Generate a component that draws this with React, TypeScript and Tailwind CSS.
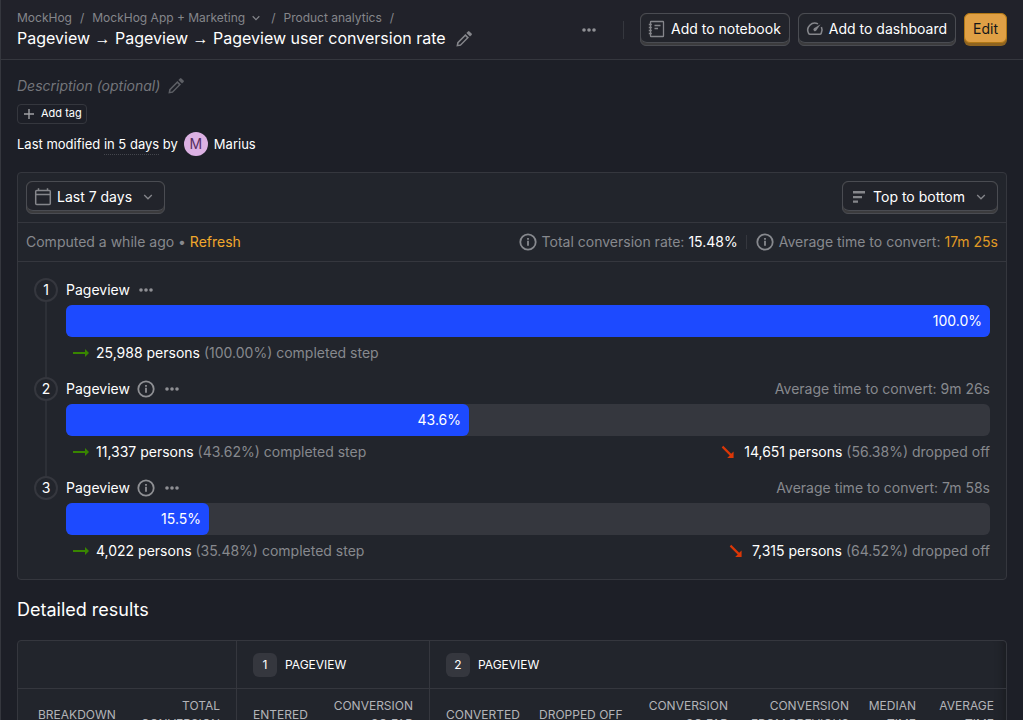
import React from "react";

type IconProps = { className?: string };

function Ellipsis({ className = "size-5" }: IconProps) {
  return (
    <svg viewBox="0 0 20 20" className={className} fill="currentColor" aria-hidden="true">
      <circle cx="5" cy="10" r="1.8" />
      <circle cx="10" cy="10" r="1.8" />
      <circle cx="15" cy="10" r="1.8" />
    </svg>
  );
}

function Pencil({ className = "size-5" }: IconProps) {
  return (
    <svg viewBox="0 0 20 20" className={className} fill="currentColor" aria-hidden="true">
      <path d="M3.2 13.2l8.2-8.2 3.6 3.6-8.2 8.2-4.4.8zM4.7 14l-.4 1.8 1.8-.4 6.7-6.7-1.5-1.5z" fillRule="evenodd" />
      <path d="M12.4 4l1.6-1.6a1 1 0 0 1 1.4 0l2.2 2.2a1 1 0 0 1 0 1.4L16 7.6z" />
    </svg>
  );
}

function Notebook({ className = "size-5" }: IconProps) {
  return (
    <svg viewBox="0 0 20 20" className={className} fill="none" stroke="currentColor" strokeWidth="1.3" aria-hidden="true">
      <rect x="3.5" y="2.5" width="13" height="15" rx="0.6" />
      <path d="M1.8 5.5h3M1.8 8.5h3M1.8 11.5h3M1.8 14.5h3M7.5 6.5h6M7.5 9.5h3.5" />
    </svg>
  );
}

function Gauge({ className = "size-5" }: IconProps) {
  return (
    <svg viewBox="0 0 20 20" className={className} fill="none" stroke="currentColor" strokeWidth="1.6" aria-hidden="true">
      <path d="M13 4.9A7 7 0 0 0 3.6 14.4a1.5 1.5 0 0 0 1.3.8h10a1.5 1.5 0 0 0 1.3-.8 7 7 0 0 0 .2-6.4" />
      <path d="M15.6 5.2l-4.3 6.3a1.6 1.6 0 1 1-2.3-2.2z" fill="currentColor" stroke="none" />
    </svg>
  );
}

function Calendar({ className = "size-5" }: IconProps) {
  return (
    <svg viewBox="0 0 20 20" className={className} fill="none" stroke="currentColor" strokeWidth="1.5" aria-hidden="true">
      <rect x="2.7" y="3.5" width="14.6" height="14" rx="1" />
      <path d="M2.7 7.5h14.6M5.5 1.3v2.2M14.5 1.3v2.2" />
    </svg>
  );
}

function Chevron({ className = "size-4" }: IconProps) {
  return (
    <svg viewBox="0 0 16 16" className={className} fill="none" stroke="currentColor" strokeWidth="1.3" aria-hidden="true">
      <path d="M4.2 6l3.8 3.8L11.8 6" />
    </svg>
  );
}

function Bars({ className = "size-5" }: IconProps) {
  return (
    <svg viewBox="0 0 20 20" className={className} fill="currentColor" aria-hidden="true">
      <path d="M4 4h12v2.6H4zM4 9h9v2.2H4zM4 13.4h5v2.4H4z" />
    </svg>
  );
}

function Info({ className = "size-5" }: IconProps) {
  return (
    <svg viewBox="0 0 20 20" className={className} fill="none" stroke="currentColor" strokeWidth="1.8" aria-hidden="true">
      <circle cx="10" cy="10" r="7.7" />
      <path d="M10 8.8v5M10 5.9v1.8" />
    </svg>
  );
}

function Flat({ className = "size-5" }: IconProps) {
  return (
    <svg viewBox="0 0 20 20" className={className} fill="currentColor" aria-hidden="true">
      <path d="M19 10l-4-4v3H3v2h12v3z" />
    </svg>
  );
}

function Down({ className = "size-5" }: IconProps) {
  return (
    <svg viewBox="0 0 20 20" className={className} fill="currentColor" aria-hidden="true">
      <path d="M5.2 3.8l8 8L15.6 9.600V16H9.200l2.500-2.500-8-8z" />
    </svg>
  );
}

function Plus({ className = "size-4" }: IconProps) {
  return (
    <svg viewBox="0 0 16 16" className={className} fill="none" stroke="currentColor" strokeWidth="1.4" aria-hidden="true">
      <path d="M8 3v10M3 8h10" />
    </svg>
  );
}

function RaisedButton({ children }: { children: React.ReactNode }) {
  return (
    <button
      type="button"
      className="flex h-[33px] rounded-md border border-[#4a4c52] bg-[#3b3b3d]"
    >
      <span className="flex h-[29px] items-center gap-1 rounded-md border-b border-[#4a4c52] bg-[#22242b] pt-px pr-2 pl-1.5 whitespace-nowrap">
        {children}
      </span>
    </button>
  );
}

function Arrow() {
  return <span className="font-['Liberation_Sans',sans-serif]">→</span>;
}

type Step = {
  name: string;
  width: number;
  label: string;
  persons: string;
  rate: string;
  time?: string;
  lost?: string;
  lostRate?: string;
};

const steps: Step[] = [
  { name: "Pageview", width: 100, label: "100.0%", persons: "25,988 persons", rate: "(100.00%)" },
  { name: "Pageview", width: 43.62, label: "43.6%", persons: "11,337 persons", rate: "(43.62%)", time: "9m 26s", lost: "14,651 persons", lostRate: "(56.38%)" },
  { name: "Pageview", width: 15.48, label: "15.5%", persons: "4,022 persons", rate: "(35.48%)", time: "7m 58s", lost: "7,315 persons", lostRate: "(64.52%)" },
];

function FunnelStep({ step, index, last }: { step: Step; index: number; last: boolean }) {
  return (
    <li className="flex">
      <div className="flex w-8 shrink-0 flex-col items-start">
        <span className="flex size-6 items-center justify-center rounded-full border-2 border-[#35373e]">{index + 1}</span>
        {!last && <span className="ml-[11px] w-0.5 flex-1 bg-[#2d3037]" />}
      </div>
      <div className="min-w-0 flex-1 pb-2">
        <div className="flex h-6 items-center justify-between">
          <div className="flex items-center gap-1.5">
            <span>{step.name}</span>
            <span className="flex items-center gap-1.5 text-[#8f9094]">
              {step.time && <Info />}
              <button type="button" aria-label="Step actions" className="block">
                <Ellipsis />
              </button>
            </span>
          </div>
          {step.time && <span className="text-[#87898e]">Average time to convert: {step.time}</span>}
        </div>
        <div className="mt-[3px] h-8 rounded-md bg-[#35373e]">
          <div
            className="flex h-8 items-center justify-end rounded-md bg-[#1d4aff] px-2"
            style={{ width: `${step.width}%` }}
          >
            {step.label}
          </div>
        </div>
        <div className="flex h-8 items-center justify-between text-[#87898e]">
          <div className="flex items-center gap-1.5 pl-1">
            <Flat className="size-5 text-[#388600]" />
            <span>
              <span className="text-white">{step.persons}</span> {step.rate} completed step
            </span>
          </div>
          {step.lost && (
            <div className="flex items-center gap-1.5">
              <Down className="size-5 text-[#db3707]" />
              <span>
                <span className="text-white">{step.lost}</span> {step.lostRate} dropped off
              </span>
            </div>
          )}
        </div>
      </div>
    </li>
  );
}

function GroupHeading({ number, name }: { number: number; name: string }) {
  return (
    <span className="flex items-center gap-2 pl-4">
      <span className="flex size-6 items-center justify-center rounded-md bg-[#35373e]">{number}</span>
      {name}
    </span>
  );
}

export default function App() {
  return (
    <div className="min-h-screen border-l border-[#35373e] bg-[#1d1f27] font-['Inter',sans-serif] text-sm text-white">
      <header className="flex h-[60px] items-center justify-between border-b border-[#35373e] bg-[#21222a] px-4">
        <div>
          <nav aria-label="Breadcrumb" className="flex h-[18px] items-center gap-2 text-xs text-[#85868b]">
            <a href="#mockhog">MockHog</a>
            <span>/</span>
            <a href="#marketing" className="flex items-center gap-1">
              MockHog App + Marketing
              <Chevron className="size-3.5" />
            </a>
            <span>/</span>
            <a href="#product-analytics">Product analytics</a>
            <span>/</span>
          </nav>
          <div className="flex h-6 items-center gap-2">
            <h1 className="text-base">
              Pageview <Arrow /> Pageview <Arrow /> Pageview user conversion rate
            </h1>
            <button type="button" aria-label="Edit name" className="text-[#85868b]">
              <Pencil />
            </button>
          </div>
        </div>
        <div className="flex items-center gap-2">
          <button type="button" aria-label="More options" className="px-2 text-[#8f9094]">
            <Ellipsis />
          </button>
          <span className="mx-2 h-[18px] w-px bg-[#35373e]" />
          <RaisedButton>
            <Notebook className="size-5 text-[#85868b]" />
            Add to notebook
          </RaisedButton>
          <RaisedButton>
            <Gauge className="size-5 text-[#85868b]" />
            Add to dashboard
          </RaisedButton>
          <button type="button" className="flex h-[33px] rounded-md bg-[#8f6420]">
            <span className="flex h-[30px] items-center rounded-md border border-[#b17816] bg-[#e0a045] px-2 pt-px text-[#15161a]">
              Edit
            </span>
          </button>
        </div>
      </header>

      <main className="px-4">
        <section className="pt-4">
          <div className="flex h-5 items-center gap-1.5 text-[#74767b]">
            <span className="italic">Description (optional)</span>
            <button type="button" aria-label="Edit description" className="text-[#5d5f65]">
              <Pencil />
            </button>
          </div>
          <button type="button" className="mt-2 flex h-5 items-center gap-1 rounded border border-[#35373e] pr-1 pl-[3px] text-[11px]">
            <Plus className="size-4 text-[#a0a1a5]" />
            Add tag
          </button>
          <div className="mt-2 flex h-6 items-center gap-1.5 text-[13px]">
            <span>
              Last modified <span className="border-b border-dotted border-[#44464d] pb-0.5">in 5 days</span> by
            </span>
            <span className="flex size-6 items-center justify-center rounded-full bg-[#dcb1e3] text-sm text-[#572e5e]">M</span>
            <span>Marius</span>
          </div>
        </section>

        <section className="mt-4 rounded border border-[#35373e] bg-[#22252c]">
          <div className="flex justify-between border-b border-[#35373e] p-2">
            <RaisedButton>
              <Calendar className="size-5 text-[#85868b]" />
              Last 7 days
              <Chevron className="ml-1 size-4 text-[#85868b]" />
            </RaisedButton>
            <RaisedButton>
              <Bars className="size-5 text-[#85868b]" />
              Top to bottom
              <Chevron className="ml-1 size-4 text-[#85868b]" />
            </RaisedButton>
          </div>
          <div className="flex h-[39px] items-center justify-between border-b border-[#35373e] px-2 text-[#87898e]">
            <div>
              Computed a while ago • <button type="button" className="text-[#f1a82c]">Refresh</button>
            </div>
            <div className="flex items-center gap-1">
              <Info />
              <span>Total conversion rate:</span>
              <span className="text-white">15.48%</span>
              <span className="mx-1 h-3.5 w-px bg-[#35373e]" />
              <Info />
              <span>Average time to convert:</span>
              <button type="button" className="text-[#e09a24]">17m 25s</button>
            </div>
          </div>
          <ol className="px-4 pt-4 pb-1">
            {steps.map((step, i) => (
              <FunnelStep key={step.persons} step={step} index={i} last={i === steps.length - 1} />
            ))}
          </ol>
        </section>

        <h2 className="mt-4 text-lg">Detailed results</h2>

        <div className="mt-4 overflow-hidden rounded border border-[#35373e] bg-[#22252c] shadow-[inset_-12px_0_10px_-10px_rgba(0,0,0,0.3)]">
          <table className="w-full table-fixed border-separate border-spacing-0 text-xs">
            <colgroup>
              <col className="w-[110px]" />
              <col className="w-[108px]" />
              <col className="w-[83px]" />
              <col className="w-[110px]" />
              <col className="w-[102px]" />
              <col className="w-[106px]" />
              <col className="w-[99px]" />
              <col className="w-[121px]" />
              <col className="w-[67px]" />
              <col />
            </colgroup>
            <thead className="uppercase">
              <tr className="h-12 [&>th]:border-b [&>th]:border-[#35373e] [&>th]:p-0 [&>th]:font-normal">
                <td colSpan={2} className="border-b border-[#35373e]" />
                <th colSpan={2} className="border-l">
                  <GroupHeading number={1} name="Pageview" />
                </th>
                <th colSpan={6} className="border-l">
                  <GroupHeading number={2} name="Pageview" />
                </th>
              </tr>
              <tr className="text-[#b3b4b8] [&>th]:py-2 [&>th]:font-normal [&>th]:leading-[18px]">
                <th className="pl-5 text-left">Breakdown</th>
                <th className="pr-4 pl-2 text-right">Total conversion</th>
                <th className="border-l border-[#35373e] pl-4 text-left">Entered</th>
                <th className="pr-4 text-right">Conversion<br />so far</th>
                <th className="border-l border-[#35373e] pl-4 text-left">Converted</th>
                <th className="pl-2 text-left whitespace-nowrap">Dropped off</th>
                <th className="pr-2 text-right">Conversion<br />so far</th>
                <th className="pr-2 text-right whitespace-nowrap">Conversion<br />from previous</th>
                <th className="pr-2 text-right">Median<br />time</th>
                <th className="pr-3 text-right">Average<br />time</th>
              </tr>
            </thead>
          </table>
        </div>
      </main>
    </div>
  );
}
